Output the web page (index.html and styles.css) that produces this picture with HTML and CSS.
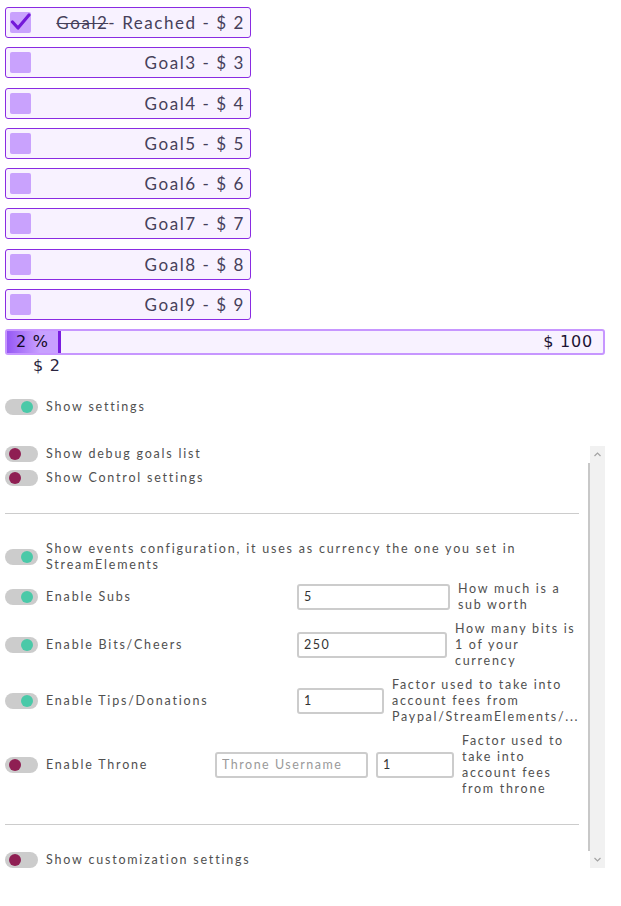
FILE: index.html
```html
<!DOCTYPE html>
<html>
<head>
<meta charset="utf-8">
<link rel="stylesheet" href="styles.css">
</head>
<body>
<div class="page">
  <div class="goals">
    <div class="goal">
      <span class="check checked"><svg width="21" height="21" viewBox="0 0 21 21"><polyline points="2.5,10 8,16 19,3" fill="none" stroke="#7318d9" stroke-width="3.2" stroke-linecap="round" stroke-linejoin="round"/></svg></span>
      <span class="goal-text"><s>Goal2</s>- Reached - $ 2</span>
    </div>
    <div class="goal"><span class="check"></span><span class="goal-text">Goal3 - $ 3</span></div>
    <div class="goal"><span class="check"></span><span class="goal-text">Goal4 - $ 4</span></div>
    <div class="goal"><span class="check"></span><span class="goal-text">Goal5 - $ 5</span></div>
    <div class="goal"><span class="check"></span><span class="goal-text">Goal6 - $ 6</span></div>
    <div class="goal"><span class="check"></span><span class="goal-text">Goal7 - $ 7</span></div>
    <div class="goal"><span class="check"></span><span class="goal-text">Goal8 - $ 8</span></div>
    <div class="goal"><span class="check"></span><span class="goal-text">Goal9 - $ 9</span></div>
  </div>

  <div class="progress">
    <div class="fill">2 %</div>
    <div class="total">$ 100</div>
  </div>
  <div class="current">$ 2</div>

  <div class="row single">
    <span class="toggle on"><span class="knob"></span></span>
    <span class="label">Show settings</span>
  </div>

  <div class="scrollbox">
    <div class="content">
      <div class="row">
        <span class="toggle off"><span class="knob"></span></span>
        <span class="label">Show debug goals list</span>
      </div>
      <div class="row">
        <span class="toggle off"><span class="knob"></span></span>
        <span class="label">Show Control settings</span>
      </div>
      <div class="sep"></div>
      <div class="row">
        <span class="toggle on"><span class="knob"></span></span>
        <span class="label wide">Show events configuration, it uses as currency the one you set in StreamElements</span>
      </div>
      <div class="row cfg">
        <div class="cfg-left">
          <span class="toggle on"><span class="knob"></span></span>
          <span class="label">Enable Subs</span>
        </div>
        <input class="field w153" value="5">
        <span class="desc d-subs">How much is a sub worth</span>
      </div>
      <div class="row cfg">
        <div class="cfg-left">
          <span class="toggle on"><span class="knob"></span></span>
          <span class="label">Enable Bits/Cheers</span>
        </div>
        <input class="field w150" value="250">
        <span class="desc d-bits">How many bits is 1 of your currency</span>
      </div>
      <div class="row cfg">
        <div class="cfg-left">
          <span class="toggle on"><span class="knob"></span></span>
          <span class="label">Enable Tips/Donations</span>
        </div>
        <input class="field w87" value="1">
        <span class="desc d-tips">Factor used to take into account fees from Paypal/StreamElements/...</span>
      </div>
      <div class="row cfg">
        <div class="cfg-left narrow">
          <span class="toggle off"><span class="knob"></span></span>
          <span class="label">Enable Throne</span>
        </div>
        <input class="field w153" placeholder="Throne Username">
        <input class="field w78" value="1">
        <span class="desc d-throne">Factor used to take into account fees from throne</span>
      </div>
      <div class="sep"></div>
      <div class="row">
        <span class="toggle off"><span class="knob"></span></span>
        <span class="label">Show customization settings</span>
      </div>
    </div>
    <div class="scrollbar">
      <div class="arrow"><svg width="7" height="5" viewBox="0 0 7 5"><polyline points="0.5,4 3.5,1 6.5,4" fill="none" stroke="#a3a3a3" stroke-width="1.2"/></svg></div>
      <div class="track"></div>
      <div class="arrow"><svg width="7" height="5" viewBox="0 0 7 5"><polyline points="0.5,1 3.5,4 6.5,1" fill="none" stroke="#a3a3a3" stroke-width="1.2"/></svg></div>
    </div>
  </div>
</div>
</body>
</html>
```
FILE: styles.css
```css
html, body {
  margin: 0;
  padding: 0;
  background: #ffffff;
}
body {
  font-family: Lato, "Noto Sans", sans-serif;
}
.page {
  width: 600px;
  padding: 7px 0 0 5px;
}
.goals {
  width: 246px;
  display: flex;
  flex-direction: column;
  gap: 9.25px;
}
.goal {
  box-sizing: border-box;
  height: 31px;
  border: 1px solid #8a2be2;
  border-radius: 3px;
  background: #f8f2ff;
  display: flex;
  align-items: center;
  padding: 0 5px 0 4px;
}
.check {
  width: 21px;
  height: 21px;
  border-radius: 2px;
  background: #c9a2fd;
  flex: none;
  display: flex;
}
.goal-text {
  flex: 1;
  text-align: right;
  font-size: 17px;
  letter-spacing: 1.55px;
  color: #46405a;
  white-space: nowrap;
}
.goal-text s {
  text-decoration-thickness: 1px;
}
.progress {
  box-sizing: border-box;
  margin-top: 9px;
  width: 600px;
  height: 26px;
  border: 2px solid #c796ff;
  border-radius: 3px;
  background: #f8f2ff;
  display: flex;
  align-items: stretch;
  font-family: "DejaVu Sans", Verdana, sans-serif;
  font-size: 16px;
  color: #1d1433;
  letter-spacing: 0.8px;
}
.fill {
  box-sizing: border-box;
  width: 54px;
  background: linear-gradient(to right, #9658f4, #c8a0ff 65%);
  border-right: 3px solid #7a1de0;
  padding-left: 9px;
  display: flex;
  align-items: center;
  color: #120a26;
}
.total {
  flex: 1;
  text-align: right;
  padding-right: 10px;
  display: flex;
  align-items: center;
  justify-content: flex-end;
}
.current {
  font-family: "DejaVu Sans", Verdana, sans-serif;
  font-size: 16px;
  letter-spacing: 0.8px;
  color: #2b2440;
  padding-left: 28px;
  height: 21px;
  line-height: 21px;
}
.row {
  display: flex;
  align-items: center;
  gap: 8px;
}
.single {
  margin-top: 23px;
  height: 16px;
}
.toggle {
  box-sizing: border-box;
  width: 33px;
  height: 16px;
  border-radius: 8px;
  background: #cccccc;
  display: flex;
  align-items: center;
  padding: 0 4px;
  flex: none;
}
.toggle.on {
  justify-content: flex-end;
  padding-right: 5px;
}
.knob {
  width: 12px;
  height: 12px;
  border-radius: 50%;
}
.on .knob { background: #4ac9a8; }
.off .knob { background: #8f1f53; }
.label {
  font-size: 12.5px;
  letter-spacing: 1.8px;
  color: #505050;
  line-height: 16px;
  white-space: nowrap;
}
.label.wide {
  white-space: normal;
}
.scrollbox {
  margin-top: 31px;
  width: 600px;
  height: 422px;
  display: flex;
}
.content {
  flex: 1;
  display: flex;
  flex-direction: column;
  gap: 8px;
}
.sep {
  height: 2px;
  background: #cccccc;
  margin: 19px 9px 19px 0;
}
.cfg-left {
  width: 284px;
  display: flex;
  align-items: center;
  gap: 8px;
  flex: none;
}
.cfg-left.narrow {
  width: 202px;
}
.field {
  box-sizing: border-box;
  height: 26px;
  border: 2px solid #cccccc;
  border-radius: 3px;
  font-family: Lato, "Noto Sans", sans-serif;
  font-size: 12.5px;
  letter-spacing: 1.5px;
  color: #333333;
  padding: 0 5px;
  margin: 0;
  background: #fff;
  flex: none;
  outline: none;
}
.field::placeholder {
  color: #9a9a9a;
}
.w153 { width: 153px; }
.w150 { width: 150px; }
.w87 { width: 87px; }
.w78 { width: 78px; }
.desc {
  font-size: 12.5px;
  letter-spacing: 1.7px;
  line-height: 16px;
  color: #505050;
}
.d-subs { width: 112px; }
.d-bits { width: 124px; }
.d-tips { width: 188px; }
.d-throne { width: 110px; }
.scrollbar {
  width: 17px;
  display: flex;
  flex-direction: column;
}
.arrow {
  height: 17px;
  margin-left: 2px;
  background: #f1f1f1;
  display: flex;
  align-items: center;
  justify-content: center;
}
.track {
  flex: 1;
  background: #f1f1f1;
  border-left: 2px solid #c8c8c8;
}
```
